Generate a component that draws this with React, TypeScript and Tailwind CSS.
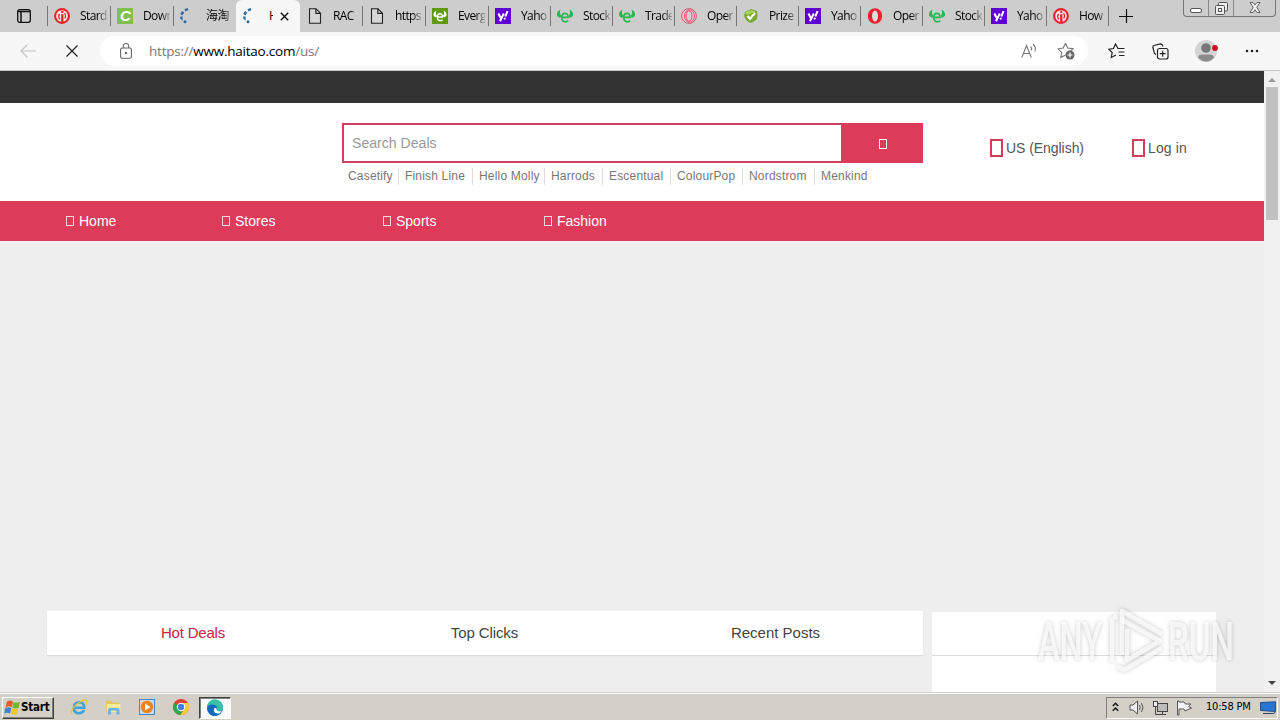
import React from 'react';

interface TabProps {
  icon: string;
  title: string;
  width: string;
  active?: boolean;
}

const tabs: TabProps[] = [
  { icon: 'ilivid', title: 'Stard', width: 'w-[63px]' },
  { icon: 'c', title: 'Down', width: 'w-[63px]' },
  { icon: 'loading', title: '海淘', width: 'w-[63px]' },
  { icon: 'loading', title: 'H', width: 'w-[64px]', active: true },
  { icon: 'file', title: 'RAC', width: 'w-[62px]' },
  { icon: 'file', title: 'https', width: 'w-[63px]' },
  { icon: 'bullBox', title: 'Everg', width: 'w-[63px]' },
  { icon: 'yahoo', title: 'Yaho', width: 'w-[62px]' },
  { icon: 'bull', title: 'Stock', width: 'w-[62px]' },
  { icon: 'bull', title: 'Trade', width: 'w-[62px]' },
  { icon: 'operaLine', title: 'Oper', width: 'w-[62px]' },
  { icon: 'prize', title: 'Prize', width: 'w-[62px]' },
  { icon: 'yahoo', title: 'Yaho', width: 'w-[62px]' },
  { icon: 'opera', title: 'Oper', width: 'w-[62px]' },
  { icon: 'bull', title: 'Stock', width: 'w-[62px]' },
  { icon: 'yahoo', title: 'Yaho', width: 'w-[62px]' },
  { icon: 'ilivid', title: 'How', width: 'w-[62px]' },
];

const brands = [
  { name: 'Casetify', width: 'w-[51px]' },
  { name: 'Finish Line', width: 'w-[68px]' },
  { name: 'Hello Molly', width: 'w-[66px]' },
  { name: 'Harrods', width: 'w-[52px]' },
  { name: 'Escentual', width: 'w-[62px]' },
  { name: 'ColourPop', width: 'w-[66px]' },
  { name: 'Nordstrom', width: 'w-[66px]' },
  { name: 'Menkind', width: 'w-[60px]' },
];

function Bull({ color }: { color: string }) {
  return (
    <g fill={color}>
      <path d="M3.500 1.500 Q-1 3.500 .2 8 L3 10 L4.500 8 Q2 6 3.500 1.500 Z" />
      <path d="M12.500 1.500 Q17 3.500 15.800 8 L13 10 L11.500 8 Q14 6 12.500 1.500 Z" />
      <path d="M4.800 9.300 H11 Q11 5.300 8 5.300 Q4.800 5.300 4.800 9.600 Q4.800 13.800 8.300 13.800 Q10 13.800 11.200 12.600" fill="none" stroke={color} strokeWidth="1.700" />
    </g>
  );
}

function Favicon({ name }: { name: string }) {
  return (
    <svg width="16" height="16" viewBox="0 0 16 16" className="shrink-0">
      {name === 'ilivid' && (
        <g fill="none" stroke="#e8202c">
          <circle cx="8" cy="8" r="6.900" fill="#f7e6e6" strokeWidth="2.100" />
          <path d="M8.300 6.200 V14" strokeWidth="2.300" />
          <path d="M5.800 11.300 Q3.800 8.500 5.500 5.800 M10.700 5 Q12.300 7.500 10.800 10.500" strokeWidth="1.300" />
          <circle cx="8.300" cy="3.900" r="1.200" fill="#e8202c" stroke="none" />
        </g>
      )}
      {name === 'c' && (
        <g>
          <rect width="16" height="16" fill="#83bf4f" />
          <text x="3" y="13" fontSize="15" fontWeight="bold" fontStyle="italic" fontFamily="Liberation Sans, sans-serif" fill="#fff">C</text>
        </g>
      )}
      {name === 'loading' && (
        <g fill="none" stroke="#2b6ca3">
          <path d="M8 1 L5 2.300" strokeWidth="2.400" />
          <path d="M3.200 3.800 L1.300 6.700" strokeWidth="2.600" />
          <path d="M.2 9.700 H2.600" strokeWidth="2.400" />
          <circle cx="5" cy="13.800" r="1.500" fill="#2b6ca3" stroke="none" />
          <circle cx="2" cy="11.500" r=".8" fill="#2b6ca3" stroke="none" />
        </g>
      )}
      {name === 'file' && (
        <path d="M2.500 .8 H9 L13.500 5.200 V15.200 H2.500 Z M8.800 .8 V5.400 H13.500" fill="#d6d6d6" stroke="#222" strokeWidth="1.100" />
      )}
      {name === 'bullBox' && (
        <g>
          <rect width="16" height="16" fill="#5f9a0c" />
          <g transform="translate(1.500 1.500) scale(.81)"><Bull color="#fff" /></g>
        </g>
      )}
      {name === 'bull' && <Bull color="#27b850" />}
      {name === 'yahoo' && (
        <g>
          <rect width="16" height="16" fill="#5f01d1" />
          <path d="M3.400 5.500 L6 10.500 M8.800 5.500 L5 13.300" stroke="#fff" strokeWidth="2" />
          <path d="M12.600 3.200 L10.300 8.500" stroke="#fff" strokeWidth="2" />
          <circle cx="9.700" cy="10.600" r="1.100" fill="#fff" />
        </g>
      )}
      {name === 'operaLine' && (
        <g fill="#e6cfd4" stroke="#e0536d" strokeWidth="1">
          <circle cx="8" cy="8" r="7.400" />
          <ellipse cx="8.500" cy="8" rx="5" ry="6.300" fill="none" />
          <ellipse cx="8" cy="8" rx="3" ry="5.400" fill="#d8d0d2" />
        </g>
      )}
      {name === 'opera' && (
        <g>
          <ellipse cx="8" cy="8" rx="7.200" ry="7.700" fill="#e9202f" />
          <ellipse cx="8" cy="8" rx="3" ry="5.600" fill="#e4dcdc" />
        </g>
      )}
      {name === 'prize' && (
        <g>
          <path d="M8 1 L11 2 L14 3 L14.500 7 L14 11 L10 14 L7 15 L3 12 L1 8 L2 4 Z" fill="#79a92c" />
          <path d="M2 5 Q7 0 13 4 L4 7 Z" fill="#a8d05c" />
          <path d="M4.500 8 L7 10.800 L12 5" fill="none" stroke="#fff" strokeWidth="2.200" />
        </g>
      )}
    </svg>
  );
}

function Tab({ icon, title, width, active }: TabProps) {
  if (active) {
    return (
      <div className={`${width} flex h-full shrink-0 items-center rounded-t-md bg-[#f7f7f7] pl-[7px]`}>
        <Favicon name={icon} />
        <span className="ml-[10px] w-[4px] overflow-hidden text-black">{title}</span>
        <svg width="9" height="9" viewBox="0 0 9 9" className="ml-[7px]">
          <path d="M.8 .8 L8.200 8.200 M8.200 .8 L.8 8.200" stroke="#111" strokeWidth="1.400" />
        </svg>
      </div>
    );
  }
  return (
    <div className={`${width} flex h-full shrink-0 items-center`}>
      <div className={`h-5 w-px ${title === 'RAC' ? 'bg-transparent' : 'bg-[#777]'}`} />
      <div className="ml-[6px] flex"><Favicon name={icon} /></div>
      <span className="ml-[10px] w-[27px] bg-linear-to-r from-black from-65% to-black/20 bg-clip-text whitespace-nowrap text-transparent">
        {title}
      </span>
    </div>
  );
}

function TabStrip() {
  return (
    <div className="flex h-8 bg-[#cdcdcd] font-['Open_Sans','Noto_Sans_CJK_SC',sans-serif] text-[12px] tracking-[-0.600px]">
      <div className="flex w-[47px] shrink-0 items-center pl-[17px]">
        <svg width="14" height="14" viewBox="0 0 14 14" fill="none" stroke="#111" strokeWidth="1.300">
          <rect x=".7" y=".7" width="12.600" height="12.600" rx="2" />
          <path d="M1 2.500 H13 M4 3 V13" strokeWidth="1.500" />
        </svg>
      </div>
      {tabs.map((tab, i) => <Tab key={i} {...tab} />)}
      <div className="flex items-center">
        <div className="h-5 w-px bg-[#777]" />
        <svg width="14" height="14" viewBox="0 0 14 14" className="ml-[10px]">
          <path d="M7.500 0 V14 M0 7.500 H14" stroke="#111" strokeWidth="1.200" />
        </svg>
      </div>
      <div className="mr-1 ml-auto flex h-[17px] w-[93px] rounded-b-[4px] border border-t-0 border-[#777]">
        <div className="flex w-[25px] justify-center border-r border-[#888] pt-[8px]">
          <div className="h-[5px] w-[12px] rounded-[2px] border border-[#555] bg-white" />
        </div>
        <div className="flex w-[25px] justify-center border-r border-[#888] pt-[2px]">
          <svg width="13" height="13" viewBox="0 0 13 13" fill="#eee" stroke="#555">
            <rect x="3.500" y=".5" width="9" height="8.500" rx="1" />
            <rect x=".5" y="3.500" width="9" height="9" rx="1" />
            <rect x="3.500" y="6.500" width="3" height="3" />
          </svg>
        </div>
        <div className="flex flex-1 justify-center pt-[2px]">
          <svg width="12" height="11" viewBox="0 0 12 11">
            <path d="M1 .5 H4 L6 3 L8 .5 H11 L7.800 5.300 L11 10.500 H8 L6 7.800 L4 10.500 H1 L4.200 5.300 Z" fill="#eee" stroke="#555" strokeWidth=".9" />
          </svg>
        </div>
      </div>
    </div>
  );
}

function Toolbar() {
  return (
    <div className="flex h-[39px] items-center border-b border-[#c8c8c8] bg-[#f7f7f7] font-['Open_Sans',sans-serif]">
      <svg width="16" height="14" viewBox="0 0 16 14" className="ml-[20px]" fill="none" stroke="#c4c4c4" strokeWidth="1.200">
        <path d="M16 7 H1 M7.500 .5 L1 7 L7.500 13.500" />
      </svg>
      <svg width="12" height="12" viewBox="0 0 12 12" className="ml-[30px]">
        <path d="M.5 .5 L11.500 11.500 M11.500 .5 L.5 11.500" stroke="#222" strokeWidth="1.200" />
      </svg>
      <div className="ml-[22px] flex h-[30px] w-[988px] items-center rounded-full bg-white pl-[20px]">
        <svg width="12" height="16" viewBox="0 0 12 16" fill="none" stroke="#666" strokeWidth="1.100">
          <rect x=".6" y="5" width="10.800" height="10.200" rx="1.500" />
          <path d="M3.300 5 V3 a2.700 2.500 0 0 1 5.400 0 V5" />
          <circle cx="6" cy="10" r=".7" fill="#666" />
        </svg>
        <span className="ml-[17px] text-[13.500px] tracking-[-0.230px] whitespace-nowrap text-[#777]">
          https://<span className="text-black">www.haitao.com</span>/us/
        </span>
        <svg width="17" height="16" viewBox="0 0 17 16" className="mr-[19px] ml-auto" fill="none" stroke="#777" strokeWidth="1.100">
          <path d="M.8 14.500 L5.500 2.500 L10.300 14.500 M2.500 10.500 H8.700" />
          <path d="M9.500 3.500 q1.800 1.500 1 4 M12 1 q3.500 3 1.800 7.500" />
        </svg>
        <svg width="18" height="18" viewBox="0 0 18 18" className="mr-[13px]">
          <path d="M8.500 1.300 L10.700 6 L16 6.700 L12.200 10.300 M8.500 13 L3.800 15.500 L4.700 10.400 L1 6.800 L6.200 6 L8.500 1.300" fill="none" stroke="#777" strokeWidth="1.100" />
          <circle cx="13" cy="13" r="4.500" fill="#666" />
          <path d="M13 10.500 V15.500 M10.500 13 H15.500" stroke="#fff" strokeWidth="1.200" />
        </svg>
      </div>
      <svg width="17" height="16" viewBox="0 0 17 16" className="ml-[20px]" fill="none" stroke="#222" strokeWidth="1.200">
        <path d="M10 5.500 L7.500 1 L5.500 5.500 L.8 6.200 L4.200 9.500 L3.300 14.500 L8 12" />
        <path d="M9.500 5.500 H16.500 M10.500 9 H16.500 M11 12.500 H16.500" />
      </svg>
      <svg width="17" height="17" viewBox="0 0 17 17" className="ml-[27px]" fill="none" stroke="#222" strokeWidth="1.200">
        <rect x="5.500" y="5.500" width="10.500" height="10.500" rx="2" />
        <path d="M10.700 7.800 V13.700 M7.800 10.700 H13.700 M3.800 11.500 L2.400 10.200 L.8 4.500 Q.7 2.800 2 2.500 L8.500 .8 Q10.300 .7 11 3.300" />
      </svg>
      <svg width="24" height="24" viewBox="0 0 24 24" className="ml-[26px]">
        <circle cx="11" cy="12" r="11" fill="#d4d4d4" />
        <circle cx="11" cy="9" r="4.800" fill="#777" />
        <path d="M3 18.500 Q3.500 15.500 7.500 15.500 H14.500 Q18.500 15.500 19 18.500 Q16 22.500 11 22.500 Q6.500 22.500 3 18.500 Z" fill="#8c8c8c" />
        <circle cx="20" cy="9" r="2.900" fill="#d4111b" />
      </svg>
      <svg width="14" height="4" viewBox="0 0 14 4" className="ml-[26px]" fill="#222">
        <circle cx="2" cy="2" r="1.300" />
        <circle cx="7" cy="2" r="1.300" />
        <circle cx="12" cy="2" r="1.300" />
      </svg>
    </div>
  );
}

function SiteHeader() {
  return (
    <div className="flex h-[98px] bg-white pt-5 pl-[342px]">
      <div className="w-[581px]">
        <div className="flex h-10 border-2 border-[#d03f5d]">
          <div className="flex-1 pl-[8px] text-[14px] leading-[36px] tracking-[0.050px] text-[#999]">Search Deals</div>
          <div className="-my-0.5 -mr-0.5 flex w-[82px] items-center justify-center bg-[#de3b5b]">
            <div className="mt-[2px] ml-[2px] h-[10px] w-[8px] border border-white" />
          </div>
        </div>
        <div className="mt-[5px] flex pl-[6px] text-[12px] leading-[17px] tracking-[0.180px] whitespace-nowrap text-[#777]">
          {brands.map((brand) => (
            <div key={brand.name} className={`${brand.width} mr-[6px] shrink-0 border-r border-[#ddd] last:border-r-0`}>
              {brand.name}
            </div>
          ))}
        </div>
      </div>
      <div className="ml-[67px] flex h-[50px] items-center text-[14px] text-[#555]">
        <div className="h-[18px] w-[13px] border-2 border-[#cf3f5c]" />
        <span className="ml-[3px] w-[126px] tracking-[-0.050px]">US (English)</span>
        <div className="h-[18px] w-[13px] border-2 border-[#cf3f5c]" />
        <span className="ml-[3px] tracking-[0.150px]">Log in</span>
      </div>
    </div>
  );
}

function NavItem({ label, className }: { label: string; className: string }) {
  return (
    <div className={`${className} flex items-center`}>
      <div className="mr-[5px] h-[10px] w-[8px] border border-white/80" />
      {label}
    </div>
  );
}

function Watermark() {
  return (
    <svg width="204" height="70" viewBox="0 0 204 70" className="absolute top-[534px] left-[1033px] drop-shadow-[0_0_2px_rgba(0,0,0,0.28)]">
      <g fill="#fff" fillOpacity=".75" fontFamily="Roboto, sans-serif" fontSize="53" fontWeight="500">
        <text x="5" y="55" textLength="64" lengthAdjust="spacingAndGlyphs">ANY</text>
        <text x="135" y="55" textLength="66" lengthAdjust="spacingAndGlyphs">RUN</text>
      </g>
      <g fill="none" stroke="#fff" strokeOpacity=".75" strokeWidth="4.500" strokeLinejoin="round">
        <path d="M79 57 V14 L84 11" />
        <path d="M89 50 V6 L129 29" />
        <path d="M89 15 L127 36 L94 55 V24" />
        <path d="M84 61 L91 65 L129 43" />
      </g>
    </svg>
  );
}

function Page() {
  return (
    <div className="relative flex h-[621px] bg-[#eee] font-['Liberation_Sans',sans-serif]">
      <div className="flex w-[1264px] flex-col overflow-hidden">
        <div className="h-8 shrink-0 bg-[#333]" />
        <SiteHeader />
        <div className="flex h-10 shrink-0 bg-[#de3b5b] pl-[66px] text-[14px] text-white">
          <NavItem label="Home" className="w-[156px]" />
          <NavItem label="Stores" className="w-[161px]" />
          <NavItem label="Sports" className="w-[161px]" />
          <NavItem label="Fashion" className="w-[161px]" />
        </div>
        <div className="mt-[370px] ml-[47px] flex gap-[9px] text-[15px] leading-[44px]">
          <div className="flex h-[44px] w-[876px] bg-white text-center text-[#444] shadow-[0_1px_1px_rgba(0,0,0,0.08)]">
            <div className="w-[292px] tracking-[-0.200px] text-[#c9214a]">Hot Deals</div>
            <div className="w-[291px] tracking-[-0.100px]">Top Clicks</div>
            <div className="w-[291px]">Recent Posts</div>
          </div>
          <div className="mt-px h-[80px] w-[284px] bg-white">
            <div className="h-[44px] border-b border-[#ddd]" />
          </div>
        </div>
      </div>
      <div className="flex w-4 flex-col items-center bg-[#f1f1f1]">
        <svg width="8" height="16" viewBox="0 0 8 16"><path d="M0 11 L4 7 L8 11 Z" fill="#999" /></svg>
        <div className="h-[133px] w-[12px] bg-[#c1c1c1]" />
        <svg width="8" height="16" viewBox="0 0 8 16" className="mt-auto"><path d="M0 5 L4 9 L8 5 Z" fill="#444" /></svg>
      </div>
      <Watermark />
    </div>
  );
}

function Taskbar() {
  return (
    <div className="flex h-7 items-center border-t border-[#d4d0c8] bg-[#d4d0c8] font-['DejaVu_Sans_Condensed','DejaVu_Sans',sans-serif] text-[11px] text-black shadow-[inset_0_1px_0_#fff]">
      <div className="mt-[2px] ml-[2px] flex h-[22px] w-[52px] items-center border border-t-white border-r-[#404040] border-b-[#404040] border-l-white pl-px shadow-[inset_-1px_-1px_0_#808080]">
        <svg width="17" height="16" viewBox="0 0 17 16">
          <path d="M3 1.500 Q6 -.5 9 1.500 L7.700 7.200 Q5 5.500 1.500 7.200 Z" fill="#e35b28" />
          <path d="M9.500 2 Q12 3.500 16 2 L14.500 8 Q11 9 8.300 7.500 Z" fill="#73b72b" />
          <path d="M1.300 8 Q4.500 6.500 7.400 8 L6 13.500 Q3.500 11.800 .2 13.500 Z" fill="#3b84d0" />
          <path d="M8.200 8.300 Q11 9.600 14.200 8.500 L12.800 14.300 Q9.500 15.300 6.700 13.800 Z" fill="#f5c42c" />
        </svg>
        <span className="text-[11.500px] font-bold tracking-[-0.200px]">Start</span>
      </div>
      <svg width="18" height="18" viewBox="0 0 18 18" className="mt-px ml-[16px]" fill="none">
        <path d="M4 9.700 H14.300 Q14 4.300 9.300 4.300 Q4 4.500 3.800 10 Q4 15.300 9 15.300 Q12.700 15.300 14 12" stroke="#3fa5dc" strokeWidth="2.600" />
        <path d="M2 16 Q-.5 13 6 7 Q13 1 16 2 Q17.500 3 15.500 6" stroke="#e9c33d" strokeWidth="1.400" />
      </svg>
      <svg width="18" height="18" viewBox="0 0 18 18" className="mt-px ml-[16px]">
        <path d="M2 2.500 H7 L8.500 4.500 H15.500 V14 H2 Z" fill="#e6c65b" />
        <path d="M3 6 H16.500 V14 H3 Z" fill="#f8e89b" />
        <path d="M4 16.500 V11.500 Q4 10 6 10 H13.500 Q15.500 10 15.500 11.500 V16.500 H12.500 V12.500 H7 V16.500 Z" fill="#69b1df" />
      </svg>
      <svg width="18" height="18" viewBox="0 0 18 18" className="mt-px ml-[16px]">
        <rect x="1.500" y="1.500" width="15" height="15" fill="#c7dcef" stroke="#4a86c4" />
        <circle cx="9" cy="9" r="6.200" fill="#ef8418" />
        <path d="M7 5.500 L12.500 9 L7 12.500 Z" fill="#fff" />
      </svg>
      <svg width="18" height="18" viewBox="0 0 18 18" className="mt-px ml-[16px]">
        <circle cx="9" cy="9" r="8" fill="#e0402f" />
        <path d="M9 9 L2 5 A8 8 0 0 0 8.500 17 L12.500 10.500 Z" fill="#35a250" />
        <path d="M9 5 H16 A8 8 0 0 1 8.500 17 L12.500 10.500 Z" fill="#f8cc36" />
        <circle cx="9" cy="9" r="4.200" fill="#fff" />
        <circle cx="9" cy="9" r="3.200" fill="#3c7de6" />
      </svg>
      <div className="mt-[2px] ml-[9px] flex h-[22px] w-[32px] items-center justify-center border border-t-[#404040] border-r-white border-b-white border-l-[#404040] bg-[#fafafa] shadow-[inset_1px_1px_0_#808080]">
        <svg width="18" height="18" viewBox="0 0 18 18">
          <circle cx="9" cy="9" r="8" fill="#1676c9" />
          <path d="M1 8 A8 8 0 0 1 17 8.500 Q17 12 13.500 12 Q10.500 12 11 10 Q11 6 6.500 6 Q2.500 6 1 9 Z" fill="#37c0a7" />
          <path d="M1 9 Q2 5.500 6 5.500 Q10 5.500 11.200 8.500 Q7 8 7 11.500 Q7 15 13 14.800 Q11 17 8 17 Q2 16 1 9 Z" fill="#176abb" />
          <path d="M8.500 9 Q11 8.500 10.700 11 Q11.500 12.800 15.800 12 L13.500 14.500 Q8 15 7.800 11 Z" fill="#fff" />
        </svg>
      </div>
      <div className="mt-[2px] mr-[2px] ml-auto flex h-[22px] w-[172px] items-center border border-t-[#808080] border-r-white border-b-white border-l-[#808080]">
        <svg width="7" height="10" viewBox="0 0 7 10" className="mb-[2px] ml-[5px]" fill="none" stroke="#111" strokeWidth="1.400">
          <path d="M.8 4 L3.500 1.200 L6.200 4 M.8 8.800 L3.500 6 L6.200 8.800" />
        </svg>
        <svg width="17" height="15" viewBox="0 0 17 15" className="ml-[10px]" fill="#eee" stroke="#555">
          <path d="M1 5 H4 L8.500 1 V14 L4 10 H1 Z" />
          <path d="M10.500 5 q1.500 2.500 0 5 M12.500 3 q3 4.500 0 9" fill="none" />
        </svg>
        <svg width="17" height="16" viewBox="0 0 17 16" className="ml-[6px]" fill="#eee" stroke="#444">
          <rect x="5.500" y="3.500" width="10" height="8" fill="#bbb" />
          <path d="M8 14.500 H14 M10.500 12 V14 M3.500 7 V14.500 H8" fill="none" />
          <rect x="1.500" y="1.500" width="4" height="5" />
        </svg>
        <svg width="17" height="16" viewBox="0 0 17 16" className="ml-[7px]" fill="#f3f3f3" stroke="#555">
          <path d="M1.500 1 V15 H3 V9 H8 L9 11 L15.500 8 L12.500 6.500 L15 4 H9.500 L8 2 H3 V1 Z" />
        </svg>
        <span className="ml-[13px] tracking-[-0.200px] whitespace-nowrap">10:58 PM</span>
        <svg width="16" height="14" viewBox="0 0 16 14" className="mr-[1px] ml-auto">
          <path d="M.5 1.500 L15.500 .8 V10.500 L.5 9.500 Z" fill="#2674d4" stroke="#234f91" />
          <path d="M3 12.500 H14 L15 11" fill="none" stroke="#345" />
        </svg>
      </div>
    </div>
  );
}

export default function App() {
  return (
    <div className="h-[720px] w-[1280px] overflow-hidden bg-white">
      <TabStrip />
      <Toolbar />
      <Page />
      <Taskbar />
    </div>
  );
}
